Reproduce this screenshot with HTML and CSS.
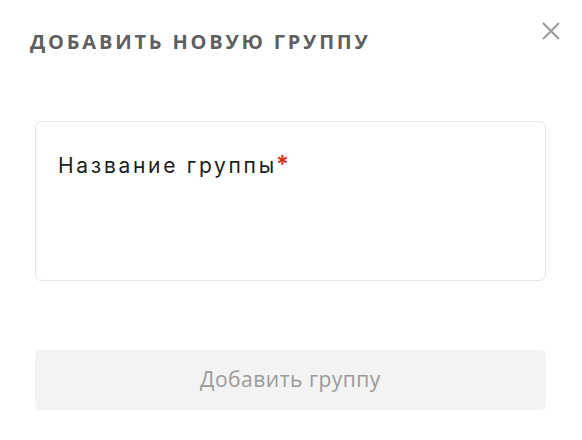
FILE: index.html
```html
<!DOCTYPE html>
<html>
<head>
<meta charset="UTF-8">
<title>Добавить новую группу</title>
<link rel="stylesheet" href="styles.css">
</head>
<body>
<div class="modal">
	<div class="modal-head">
		<h2 class="modal-title">Добавить новую группу</h2>
		<button class="modal-close" type="button" aria-label="Закрыть">
			<svg width="18" height="18" viewBox="0 0 18 18">
				<path d="M1 1L17 17M17 1L1 17" stroke="#9a9a9a" stroke-width="2" fill="none"/>
			</svg>
		</button>
	</div>

	<div class="field">
		<label class="field-label">Название группы<span class="req">*</span></label>
	</div>

	<button class="btn-submit" type="button" disabled>Добавить группу</button>
</div>
</body>
</html>
```

FILE: styles.css
```css
body {
	margin: 0px;
	padding: 0px;
	background: #fff;
	font-family: "Open Sans", "Noto Sans", Arial, sans-serif;
}

.modal {
	width: 582px;
	height: 440px;
	box-sizing: border-box;
	padding: 0px 36px 0px 35px;
}

.modal-head {
	display: flex;
	justify-content: space-between;
	align-items: flex-start;
	height: 121px;
	margin-left: -5px;
}

.modal-title {
	margin: 28px 0px 0px 0px;
	font-size: 20px;
	line-height: 28px;
	font-weight: 700;
	letter-spacing: 2.8px;
	text-transform: uppercase;
	color: #5f5f5f;
}

.modal-close {
	margin: 22px -14px 0px 0px;
	padding: 0px;
	border: 0px;
	background: none;
	width: 18px;
	height: 18px;
	cursor: pointer;
}

.field {
	height: 160px;
	box-sizing: border-box;
	border: 1px solid #e6e6e6;
	border-radius: 6px;
	padding: 29px 22px;
}

.field-label {
	font-family: Inter, "Noto Sans", sans-serif;
	font-size: 21px;
	line-height: 28px;
	letter-spacing: 2.7px;
	color: #1e1e1e;
}

.req {
	color: #d9381e;
	font-size: 24px;
	font-weight: 700;
	letter-spacing: 0px;
	margin-left: -1px;
}

.btn-submit {
	display: block;
	width: 100%;
	height: 60px;
	margin-top: 69px;
	padding-bottom: 3px;
	border: 0px;
	border-radius: 6px;
	background: #f3f3f3;
	font-family: "Open Sans", "Noto Sans", sans-serif;
	font-size: 21px;
	letter-spacing: 0.5px;
	color: #9a9a9a;
}
```
